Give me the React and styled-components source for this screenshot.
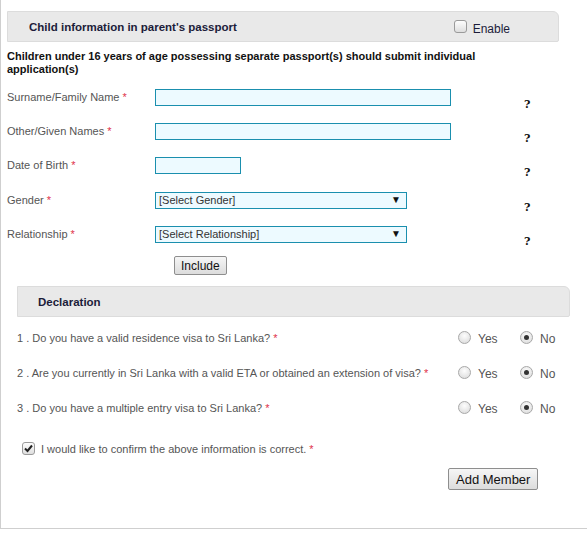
import React from "react";
import styled, { createGlobalStyle } from "styled-components";

const Global = createGlobalStyle`
  html, body { margin: 0; padding: 0; background: #fff; }
  body { font-family: "Liberation Sans", Arial, sans-serif; }
`;

const Panel = styled.div`
  box-sizing: border-box;
  width: 587px;
  height: 529px;
  border-left: 1px solid #cfcfcf;
  border-bottom: 1px solid #cfcfcf;
  padding: 11px 0 0 5px;
`;

const SectionHeader = styled.div`
  box-sizing: border-box;
  display: flex;
  align-items: center;
  justify-content: space-between;
  width: ${(p) => p.$width}px;
  height: 31px;
  margin-left: ${(p) => p.$indent}px;
  margin-top: ${(p) => p.$mt || 0}px;
  background: #e9e9e9;
  border: 1px solid #dcdcdc;
  border-radius: 0 6px 2px 0;
  padding-left: ${(p) => p.$pad}px;
  padding-right: 48px;
`;

const HeaderTitle = styled.span`
  font-size: 11.5px;
  font-weight: bold;
  color: #1c1c3a;
  padding-top: 1px;
`;

const EnableLabel = styled.label`
  display: flex;
  align-items: center;
  gap: 6px;
  font-size: 12px;
  color: #1c1c3a;
  padding-top: 4px;
`;

const Box = styled.span`
  box-sizing: border-box;
  display: inline-flex;
  align-items: center;
  justify-content: center;
  flex: none;
  width: 13px;
  height: 13px;
  border: 1px solid #9a9a9a;
  border-radius: 3px;
  background: linear-gradient(#fdfdfd, #dedede);
  margin-top: ${(p) => p.$mt || 0}px;
`;

const Note = styled.p`
  width: 500px;
  margin: 8px 0 0 1px;
  font-size: 11px;
  font-weight: bold;
  line-height: 13px;
  color: #111;
`;

const Fields = styled.div`
  margin-top: 8px;
  margin-left: 1px;
`;

const FieldRow = styled.div`
  display: grid;
  grid-template-columns: 148px 369px auto;
  align-items: center;
  height: 16px;
  margin-bottom: ${(p) => p.$gap}px;
`;

const Label = styled.span`
  font-size: 11px;
  color: #555;
`;

const Req = styled.span`
  color: #e0324a;
  margin-left: 3px;
`;

const TextInput = styled.div`
  box-sizing: border-box;
  width: ${(p) => p.$w}px;
  height: 17px;
  border: 1px solid #1a8fae;
  background: #edfaff;
`;

const Select = styled.div`
  box-sizing: border-box;
  display: flex;
  align-items: center;
  justify-content: space-between;
  width: 252px;
  height: 17px;
  border: 1px solid #1a8fae;
  background: #edfaff;
  padding: 0 5px 0 3px;
  font-size: 11px;
  color: #333;
`;

const Arrow = styled.span`
  font-size: 10px;
  color: #111;
  line-height: 1;
`;

const Help = styled.span`
  font-family: "DejaVu Serif", serif;
  font-size: 11px;
  font-weight: bold;
  color: #111;
  margin-top: 15px;
  line-height: 1;
`;

const ActionRow = styled.div`
  display: flex;
  padding-left: ${(p) => p.$left}px;
  margin-top: ${(p) => p.$mt}px;
`;

const Button = styled.button`
  font-family: "Liberation Sans", Arial, sans-serif;
  font-size: ${(p) => p.$fs}px;
  color: #111;
  height: ${(p) => p.$h}px;
  padding: 0 ${(p) => p.$px}px;
  border: 1px solid #8e8e8e;
  border-radius: 2px;
  background: linear-gradient(#f6f6f6, #dcdcdc);
  line-height: 1;
`;

const Questions = styled.div`
  margin-top: 12px;
  padding-left: 11px;
`;

const QRow = styled.div`
  display: grid;
  grid-template-columns: 441px 62px auto;
  align-items: center;
  height: 16px;
  margin-bottom: 19px;
`;

const QText = styled.span`
  font-size: 11px;
  color: #555;
  white-space: nowrap;
`;

const RadioOpt = styled.label`
  display: flex;
  align-items: center;
  gap: 7px;
  font-size: 12px;
  color: #555;
`;

const OptText = styled.span`
  margin-top: 3px;
`;

const Radio = styled.span`
  box-sizing: border-box;
  display: inline-flex;
  align-items: center;
  justify-content: center;
  width: 13px;
  height: 13px;
  border-radius: 50%;
  border: 1px solid #a8a8a8;
  background: radial-gradient(circle at 50% 35%, #fdfdfd, #d8d8d8);
  &::after {
    content: "";
    display: ${(p) => (p.$on ? "block" : "none")};
    width: 5px;
    height: 5px;
    border-radius: 50%;
    background: #333;
  }
`;

const ConfirmRow = styled.label`
  display: flex;
  align-items: center;
  gap: 6px;
  margin: 27px 0 0 16px;
  font-size: 11px;
  color: #555;
`;

export default function App() {
  const fields = [
    { label: "Surname/Family Name", type: "text", w: 296, gap: 18 },
    { label: "Other/Given Names", type: "text", w: 296, gap: 18 },
    { label: "Date of Birth", type: "text", w: 86, gap: 19 },
    { label: "Gender", type: "select", text: "[Select Gender]", gap: 18 },
    { label: "Relationship", type: "select", text: "[Select Relationship]", gap: 0 },
  ];
  const questions = [
    "1 . Do you have a valid residence visa to Sri Lanka?",
    "2 . Are you currently in Sri Lanka with a valid ETA or obtained an extension of visa?",
    "3 . Do you have a multiple entry visa to Sri Lanka?",
  ];
  return (
    <>
      <Global />
      <Panel>
        <SectionHeader $width={552} $indent={1} $pad={21}>
          <HeaderTitle>Child information in parent's passport</HeaderTitle>
          <EnableLabel>
            <Box $mt={-4} />
            Enable
          </EnableLabel>
        </SectionHeader>
        <Note>
          Children under 16 years of age possessing separate passport(s) should submit individual application(s)
        </Note>
        <Fields>
          {fields.map((f) => (
            <FieldRow key={f.label} $gap={f.gap}>
              <Label>
                {f.label}
                <Req>*</Req>
              </Label>
              <div>
                {f.type === "text" ? (
                  <TextInput $w={f.w} />
                ) : (
                  <Select>
                    {f.text}
                    <Arrow>▼</Arrow>
                  </Select>
                )}
              </div>
              <Help>?</Help>
            </FieldRow>
          ))}
        </Fields>
        <ActionRow $left={168} $mt={19}>
          <Button $fs={12} $h={19} $px={6}>Include</Button>
        </ActionRow>
        <SectionHeader $width={553} $indent={11} $pad={20} $mt={11}>
          <HeaderTitle>Declaration</HeaderTitle>
        </SectionHeader>
        <Questions>
          {questions.map((q) => (
            <QRow key={q}>
              <QText>
                {q}
                <Req>*</Req>
              </QText>
              <RadioOpt>
                <Radio />
                <OptText>Yes</OptText>
              </RadioOpt>
              <RadioOpt>
                <Radio $on />
                <OptText>No</OptText>
              </RadioOpt>
            </QRow>
          ))}
        </Questions>
        <ConfirmRow>
          <Box>
            <svg width="9" height="9" viewBox="0 0 9 9">
              <path d="M1 4.5 L3.5 7 L8 1.5" fill="none" stroke="#222" strokeWidth="2" />
            </svg>
          </Box>
          <span>
            I would like to confirm the above information is correct.
            <Req>*</Req>
          </span>
        </ConfirmRow>
        <ActionRow $left={442} $mt={13}>
          <Button $fs={13} $h={22} $px={7}>Add Member</Button>
        </ActionRow>
      </Panel>
    </>
  );
}
